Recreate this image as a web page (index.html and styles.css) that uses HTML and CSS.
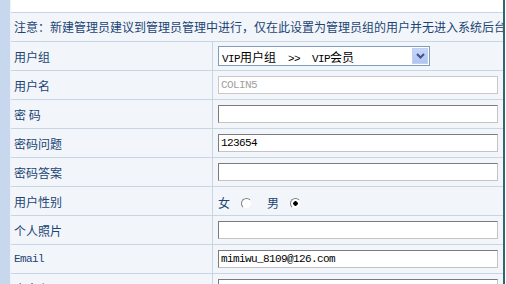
FILE: index.html
```html
<!DOCTYPE html>
<html lang="zh-CN">
<head>
  <meta charset="UTF-8">
  <title>编辑用户</title>
  <link rel="stylesheet" href="styles.css">
</head>
<body>
  <div class="page">
    <div class="strip"></div>
    <div class="main">
      <div class="notice">注意：新建管理员建议到管理员管理中进行，仅在此设置为管理员组的用户并无进入系统后台的权限</div>

      <div class="row">
        <div class="label">用户组</div>
        <div class="field">
          <div class="select">
            <span class="select-text"><span class="a">VIP</span>用户组<span class="a">  &gt;&gt;  VIP</span>会员</span>
            <span class="arrow">
              <svg width="9" height="6" viewBox="0 0 9 6"><path d="M1 1 L4.5 4.5 L8 1" fill="none" stroke="#3f5486" stroke-width="2"/></svg>
            </span>
          </div>
        </div>
      </div>

      <div class="row">
        <div class="label">用户名</div>
        <div class="field"><div class="input disabled">COLIN5</div></div>
      </div>

      <div class="row">
        <div class="label">密&nbsp;码</div>
        <div class="field"><div class="input"></div></div>
      </div>

      <div class="row">
        <div class="label">密码问题</div>
        <div class="field"><div class="input">123654</div></div>
      </div>

      <div class="row">
        <div class="label">密码答案</div>
        <div class="field"><div class="input"></div></div>
      </div>

      <div class="row">
        <div class="label">用户性别</div>
        <div class="field gender">
          <span>女</span><span class="radio"></span>
          <span class="male">男</span><span class="radio checked"></span>
        </div>
      </div>

      <div class="row">
        <div class="label">个人照片</div>
        <div class="field"><div class="input"></div></div>
      </div>

      <div class="row">
        <div class="label mono">Email</div>
        <div class="field"><div class="input">mimiwu_8109@126.com</div></div>
      </div>

      <div class="row">
        <div class="label">个人主页</div>
        <div class="field"><div class="input"></div></div>
      </div>
    </div>
  </div>
</body>
</html>
```

FILE: styles.css
```css
body {
  margin: 0;
  font-family: "Noto Sans CJK SC", sans-serif;
  font-size: 12px;
  color: #1c4474;
  background: #fff;
  overflow: hidden;
}
.page {
  display: flex;
  height: 284px;
}
.strip {
  width: 10px;
  background: #c6d7ee;
  border-right: 1px solid #eef3fa;
}
.main {
  flex: 1;
  min-width: 0;
  padding-top: 12px;
  margin-right: 1px;
  border-right: 2px solid #2f6670;
}
.notice {
  height: 28px;
  line-height: 28px;
  padding-left: 3px;
  white-space: nowrap;
  overflow: hidden;
  background: #f2f6fa;
  border-top: 1px solid #c8d5e3;
  border-bottom: 1px solid #c8d5e3;
}
.row {
  display: grid;
  grid-template-columns: 202px 1fr;
  height: 28px;
  background: #f2f6fa;
  border-bottom: 1px solid #c8d5e3;
}
.label {
  display: flex;
  align-items: center;
  padding-left: 3px;
  border-right: 1px solid #c8d5e3;
}
.mono {
  font-family: "Liberation Mono", monospace;
  font-size: 11px;
  letter-spacing: -0.6px;
}
.field {
  display: flex;
  align-items: center;
  padding-left: 5px;
}
.input {
  box-sizing: border-box;
  width: 280px;
  height: 18px;
  line-height: 16px;
  padding-left: 2px;
  background: #fff;
  border: 1px solid;
  border-color: #7b7b7b #c3c3c3 #c3c3c3 #7b7b7b;
  font-family: "Liberation Mono", monospace;
  font-size: 11px;
  letter-spacing: -0.6px;
  color: #000;
}
.input.disabled {
  border-color: #c8c8c8;
  color: #a0a0a0;
}
.select {
  box-sizing: border-box;
  width: 212px;
  height: 20px;
  display: flex;
  align-items: center;
  justify-content: space-between;
  background: #fff;
  border: 1px solid #7f9db9;
  padding: 1px;
  color: #000;
}
.select-text {
  padding-left: 2px;
  font-size: 12px;
  white-space: pre;
}
.select-text .a {
  font-family: "Liberation Mono", monospace;
  font-size: 11px;
  letter-spacing: -0.6px;
}
.arrow {
  width: 16px;
  height: 16px;
  display: flex;
  align-items: center;
  justify-content: center;
  background: linear-gradient(#c7d6f8, #b1c4f2);
  border: 1px solid #c0cff3;
  box-sizing: border-box;
}
.gender {
  padding-top: 4px;
}
.gender span {
  line-height: 12px;
}
.radio {
  box-sizing: border-box;
  width: 11px;
  height: 11px;
  margin-left: 11px;
  border-radius: 50%;
  border: 1px solid;
  border-color: #808080 #f4f4f4 #f4f4f4 #808080;
  background: #fff;
}
.radio.checked {
  background: radial-gradient(circle, #000 0 2px, #fff 2.5px);
}
.male {
  margin-left: 15px;
}
```
